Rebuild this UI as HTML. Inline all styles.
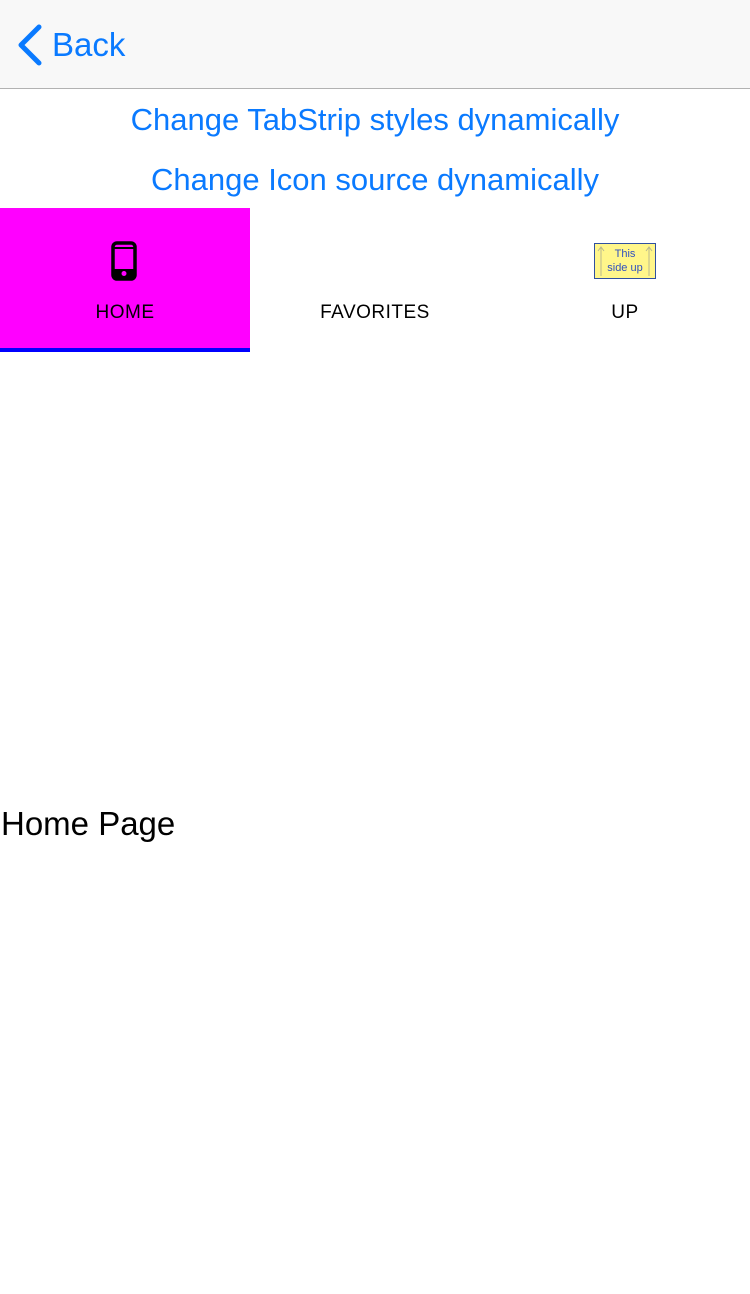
<!DOCTYPE html>
<html><head><style>
body{margin:0;width:750px;height:1294px;background:#fff;font-family:"Liberation Sans",sans-serif;position:relative;overflow:hidden}
.nav{position:absolute;left:0;top:0;width:750px;height:88px;background:#f8f8f8;border-bottom:1px solid #b2b2b2}
.back{position:absolute;left:52px;top:26px;font-size:33px;color:#0a7aff}
.btn{position:absolute;left:0;width:750px;text-align:center;color:#0a7aff;font-size:31px}
.tab{position:absolute;top:208px;width:250px;height:144px;text-align:center;font-size:19px;letter-spacing:0.5px}
.tab .l{position:absolute;top:94px;left:0;width:250px}
</style></head><body>
<div class="nav">
<svg style="position:absolute;left:16px;top:23px" width="28" height="44"><path d="M23 4 L5 22 L23 40" stroke="#0a7aff" stroke-width="5" fill="none" stroke-linecap="round" stroke-linejoin="round"/></svg>
<div class="back">Back</div>
</div>
<div class="btn" style="top:102px">Change TabStrip styles dynamically</div>
<div class="btn" style="top:162px">Change Icon source dynamically</div>
<div class="tab" style="left:0;background:#ff00ff;height:140px;border-bottom:4px solid #0000ff">
<svg style="position:absolute;left:111px;top:33px" width="28" height="40"><rect x="2" y="2" width="22" height="36" rx="4" fill="none" stroke="#000" stroke-width="3.5"/><rect x="3" y="6" width="20" height="2" fill="#000"/><rect x="3" y="28" width="20" height="9" fill="#000"/><circle cx="13" cy="32.5" r="2.5" fill="#ff00ff"/><rect x="10" y="4" width="6" height="1.5" fill="#ff00ff"/></svg>
<div class="l">HOME</div></div>
<div class="tab" style="left:250px"><div class="l">FAVORITES</div></div>
<div class="tab" style="left:500px">
<div style="position:absolute;left:94px;top:35px;width:62px;height:36px;background:#fff68a;border:1px solid #3050a0;font-size:11px;line-height:14px;color:#3050c0;padding-top:3px;box-sizing:border-box;letter-spacing:0">
<svg style="position:absolute;left:2px;top:1px" width="8" height="32"><path d="M4 31V2M1 6L4 2L7 6" stroke="#b8b890" stroke-width="1" fill="none"/></svg>
<svg style="position:absolute;right:2px;top:1px" width="8" height="32"><path d="M4 31V2M1 6L4 2L7 6" stroke="#b8b890" stroke-width="1" fill="none"/></svg>
This<br>side up</div>
<div class="l">UP</div></div>
<div style="position:absolute;left:1px;top:805px;font-size:33px;color:#000">Home Page</div>
</body></html>
